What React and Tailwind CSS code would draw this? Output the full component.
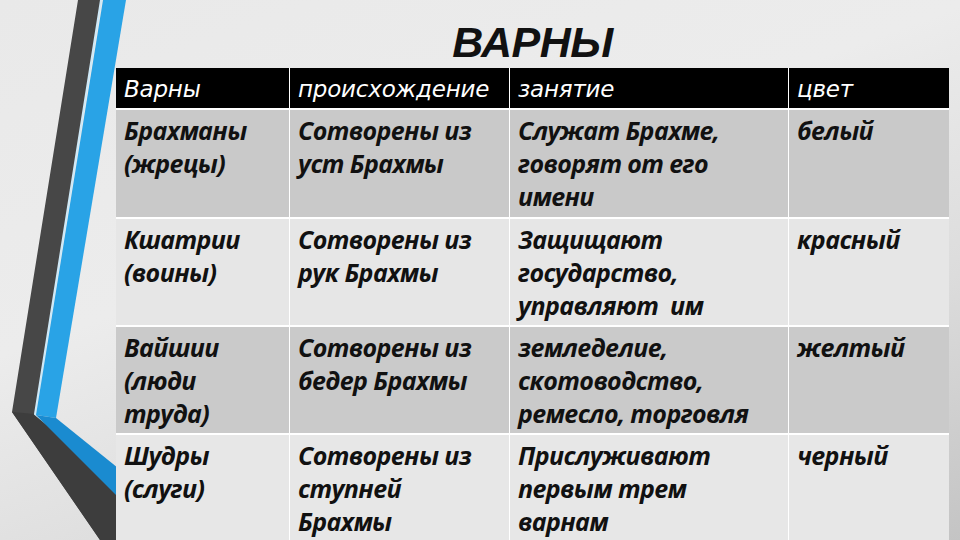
import React from "react";

const rows = [
  {
    bg: "bg-[#c9c9c9]",
    h: "h-[109px]",
    cells: [
      ["Брахманы", "(жрецы)"],
      ["Сотворены из", "уст Брахмы"],
      ["Служат Брахме,", "говорят от его", "имени"],
      ["белый"],
    ],
  },
  {
    bg: "bg-[#e6e6e6]",
    h: "h-[108px]",
    cells: [
      ["Кшатрии", "(воины)"],
      ["Сотворены из", "рук Брахмы"],
      ["Защищают", "государство,", "управляют  им"],
      ["красный"],
    ],
  },
  {
    bg: "bg-[#cacaca]",
    h: "h-[108px]",
    cells: [
      ["Вайшии", "(люди", "труда)"],
      ["Сотворены из", "бедер Брахмы"],
      ["земледелие,", "скотоводство,", "ремесло, торговля"],
      ["желтый"],
    ],
  },
  {
    bg: "bg-[#e7e7e7]",
    h: "h-[110px]",
    cells: [
      ["Шудры", "(слуги)"],
      ["Сотворены из", "ступней", "Брахмы"],
      ["Прислуживают", "первым трем", "варнам"],
      ["черный"],
    ],
  },
];

const widths = ["w-[173px]", "w-[220px]", "w-[279px]", "w-[161px]"];
const headers = ["Варны", "происхождение", "занятие", "цвет"];

function Decoration() {
  return (
    <svg
      className="absolute left-0 top-0"
      width="130"
      height="540"
      viewBox="0 0 130 540"
    >
      <polygon points="78,0 101,0 35,414 118,480 118,540 100,540 12,412" fill="#474747" />
      <polygon points="12,412 35,414 118,480 118,540 100,540" fill="#3d3d3d" />
      <polyline points="101,0 35,414 118,482" fill="none" stroke="#cfe9f7" strokeWidth="2" />
      <polygon points="103,0 126,0 56,418 36,415" fill="#29a3e6" />
      <polygon points="36,415 56,418 118,468 118,497" fill="#1a8bd0" />
    </svg>
  );
}

export default function App() {
  return (
    <div className="relative w-[960px] h-[540px] overflow-hidden bg-[linear-gradient(160deg,#e9e9e9_0%,#ececec_40%,#dcdcdc_70%,#c4c4c4_100%)]">
      <Decoration />
      <div className="relative flex flex-col pl-[116px] pr-[11px]">
        <div className="h-[68px] flex items-end justify-center pb-[4px]">
          <h1 className="text-[43px] leading-none font-bold italic text-[#111] font-['Liberation_Sans',Arial,sans-serif] tracking-[-0.5px]">
            ВАРНЫ
          </h1>
        </div>
        <div className="flex flex-col">
          <div className="flex h-[40px] bg-black">
            {headers.map((h, i) => (
              <div
                key={i}
                className={`${widths[i]} ${i > 0 ? "border-l border-white" : ""} flex items-center pl-[8px] pt-[2px] text-white italic text-[23px] font-['DejaVu_Sans',Verdana,sans-serif] tracking-[-0.2px]`}
              >
                {h}
              </div>
            ))}
          </div>
          {rows.map((r, ri) => (
            <div key={ri} className={`flex ${r.h} ${r.bg} border-t-2 border-white`}>
              {r.cells.map((c, ci) => (
                <div
                  key={ci}
                  className={`${widths[ci]} ${ci > 0 ? "border-l border-white" : ""} pl-[8px] pt-[4px] text-[#111] italic font-bold text-[25px] leading-[33px] font-['Open_Sans',sans-serif] tracking-[-0.6px] whitespace-pre`}
                >
                  {c.map((line, li) => (
                    <div key={li}>{line}</div>
                  ))}
                </div>
              ))}
            </div>
          ))}
        </div>
      </div>
    </div>
  );
}
